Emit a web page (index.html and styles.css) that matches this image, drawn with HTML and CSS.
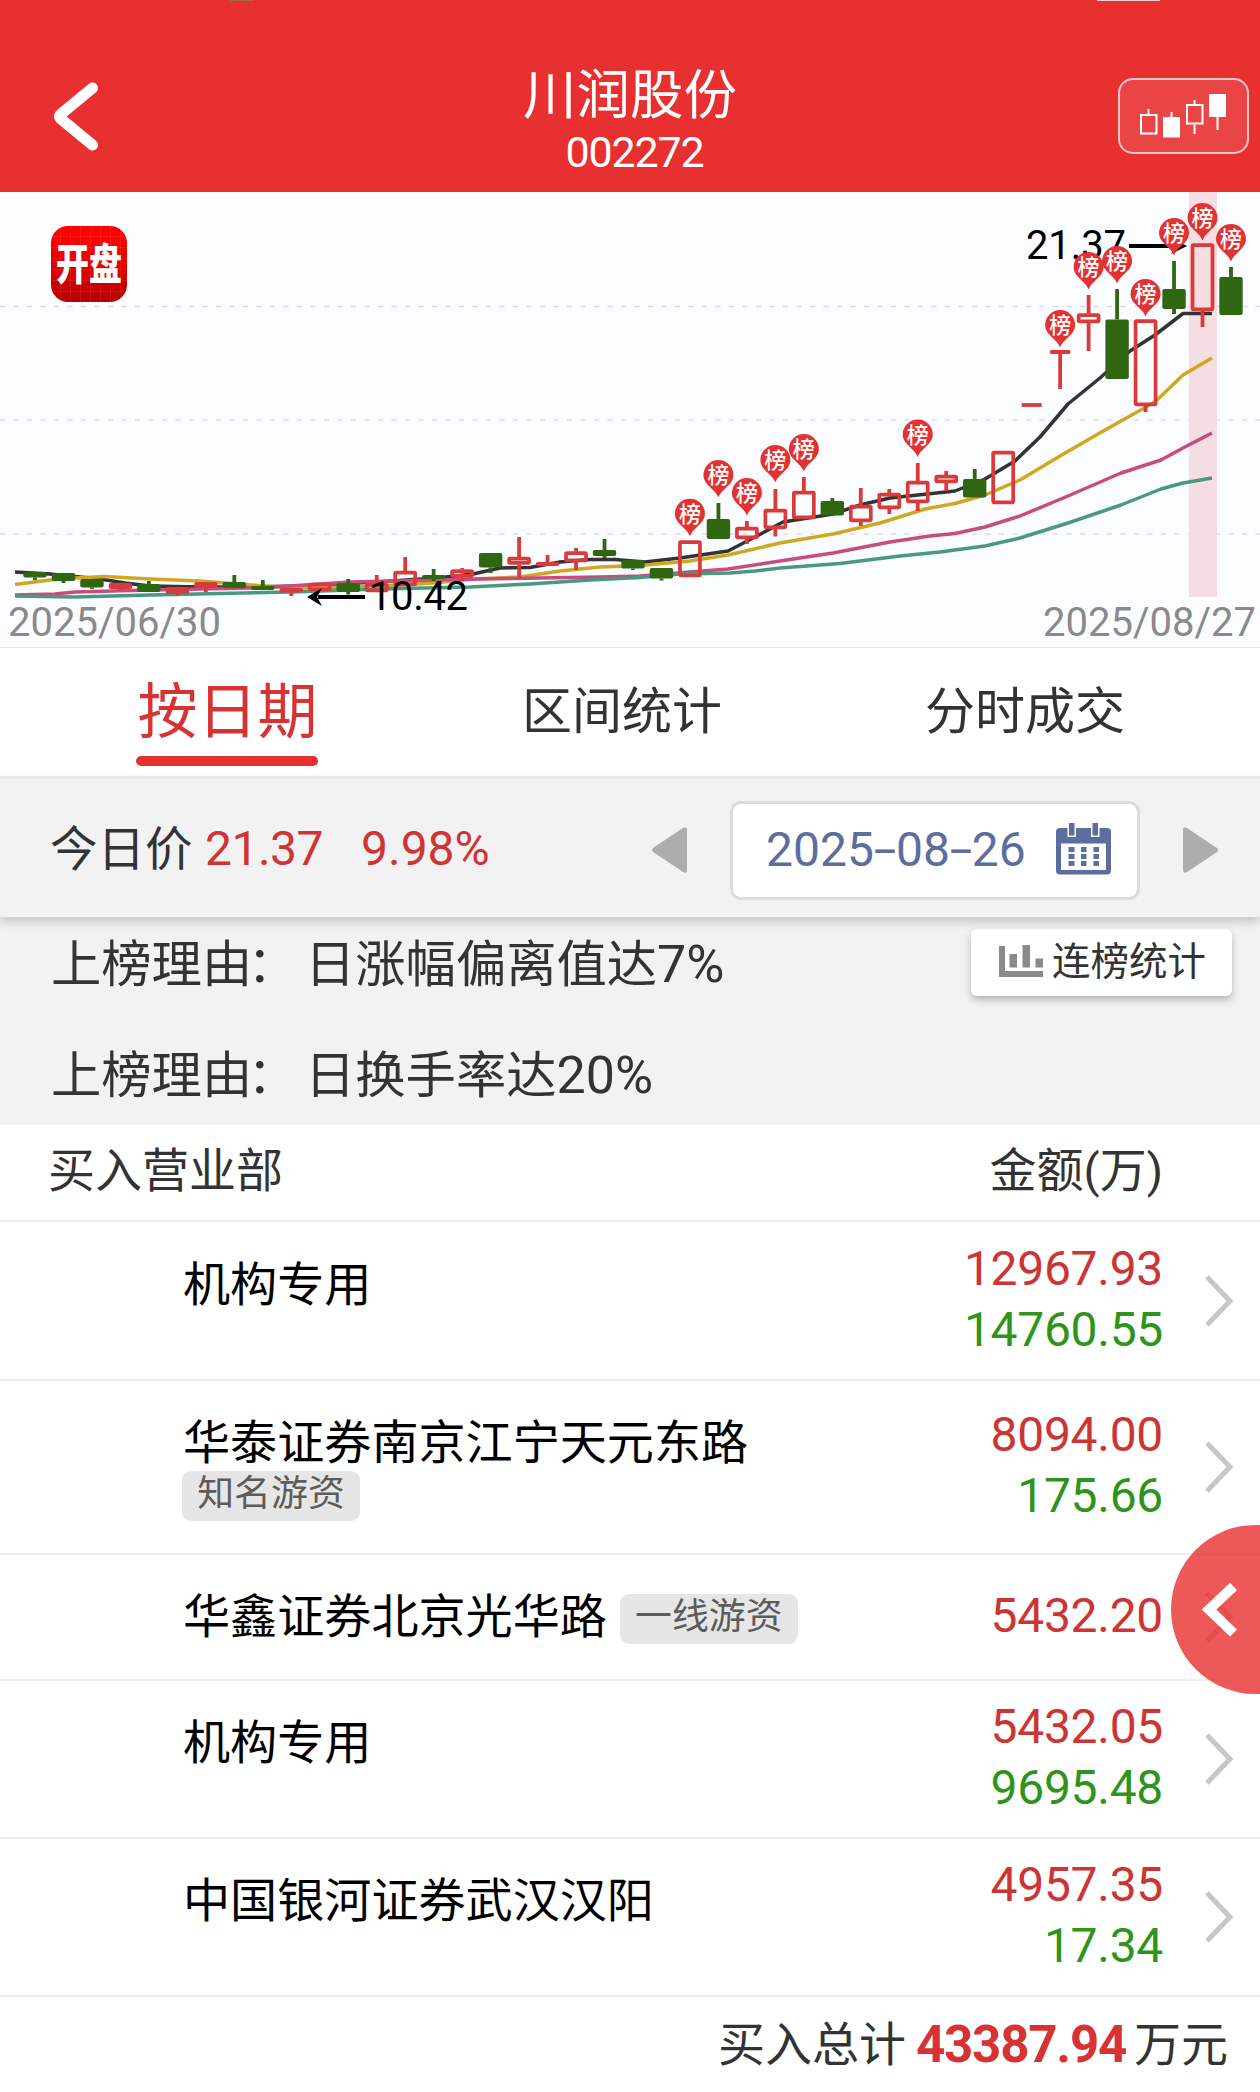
FILE: index.html
```html
<!DOCTYPE html>
<html lang="zh-CN">
<head>
<meta charset="utf-8">
<title>川润股份 002272</title>
<link rel="stylesheet" href="styles.css">
</head>
<body>
<header class="topbar">
  <svg class="back" width="60" height="80" viewBox="0 0 60 80"><path d="M47.500 12 16 38q-3 2.500 0 5L47.500 69" fill="none" stroke="#fff" stroke-width="11" stroke-linecap="round" stroke-linejoin="round"/></svg>
  <div class="heading">
    <h1 class="stock-name">川润股份</h1>
    <div class="stock-code">002272</div>
  </div>
  <div class="kline-button">
    <svg width="90" height="44" viewBox="0 0 90 44" fill="none" stroke="#fff" stroke-width="2">
      <path d="M11.500 15v6M34.500 18v5M57.500 6v5M57.500 31v9M80.500 22v14"/>
      <path d="M4 21h15.500v18.500H4zM50 11h15.500v18.500H50z"/>
      <path d="M26 23h17v20.500H26zM72 0h17v23H72z" fill="#fff" stroke="none"/>
    </svg>
  </div>
</header>

<section class="chart">
  <svg id="kline" width="1260" height="456" viewBox="0 192 1260 456"></svg>
  <div class="brand"><span class="brand-text">开盘</span></div>
</section>

<nav class="tabs">
  <div class="tab active">按日期</div>
  <div class="tab">区间统计</div>
  <div class="tab">分时成交</div>
</nav>

<section class="pricebar">
  <span class="price-label">今日价</span>
  <span class="price">21.37</span>
  <span class="change">9.98%</span>
  <svg class="prev" width="35" height="46" viewBox="0 0 35 46"><path d="M35 3v40q0 4-4 2L1 25q-2-2 0-4L31 1q4-2 4 2z" fill="#adadad"/></svg>
  <div class="datebox">
    <span class="date">2025<span class="dash">-</span>08<span class="dash">-</span>26</span>
    <svg width="55" height="52" viewBox="0 0 55 52">
      <rect y="5" width="55" height="46.500" rx="4" fill="#5c6e9f"/>
      <path d="M5 20.500h45v26.500H5z" fill="#fff"/>
      <path d="M11.500 0h8.500v14h-8.500zM35 0h8.500v14H35z" fill="#fff"/>
      <path d="M13 0h5.500v12.500H13zM36.500 0H42v12.500h-5.500z" fill="#5c6e9f"/>
      <path d="M12.500 24h6v5h-6zM25 24h5.500v5H25zM37.500 24h5.500v5h-5.500zM12.500 31h6v5h-6zM25 31h5.500v5H25zM37.500 31h5.500v5h-5.500zM12.500 38h6v5h-6zM25 38h5.500v5H25zM37.500 38h5.500v5h-5.500z" fill="#5c6e9f"/>
    </svg>
  </div>
  <svg class="next" width="35" height="46" viewBox="0 0 35 46"><path d="M0 3v40q0 4 4 2l30-20q2-2 0-4L4 1Q0-1 0 3z" fill="#adadad"/></svg>
</section>

<section class="reasons">
  <div class="reason-list">
    <p class="reason"><span class="reason-label">上榜理由<span class="colon">：</span></span>日涨幅偏离值达<span class="figure">7%</span></p>
    <p class="reason"><span class="reason-label">上榜理由<span class="colon">：</span></span>日换手率达<span class="figure">20%</span></p>
  </div>
  <div class="stat-button">
    <svg width="44" height="32" viewBox="0 0 44 32"><path d="M0 1h6v25h38v6H0zM10.500 9H18v13.500h-7.500zM23.500 0H31v22.500h-7.500zM36.500 13.500H44v9h-7.500z" fill="#8a8a8a"/></svg>
    <span class="stat-text">连榜统计</span>
  </div>
</section>

<section class="table">
  <div class="thead"><span>买入营业部</span><span>金额(万)</span></div>
  <div class="row first">
    <div class="name">机构专用</div>
    <div class="amounts"><span class="buy">12967.93</span><span class="sell">14760.55</span></div>
    <svg class="more" width="29" height="52" viewBox="0 0 29 52"><path d="M2 2l23 24L2 50"/></svg>
  </div>
  <div class="row tall">
    <div class="name">华泰证券南京江宁天元东路 <span class="tag below">知名游资</span></div>
    <div class="amounts"><span class="buy">8094.00</span><span class="sell">175.66</span></div>
    <svg class="more" width="29" height="52" viewBox="0 0 29 52"><path d="M2 2l23 24L2 50"/></svg>
  </div>
  <div class="row short">
    <div class="name">华鑫证券北京光华路<span class="tag">一线游资</span></div>
    <div class="amounts"><span class="buy">5432.20</span></div>
    <svg class="more" width="29" height="52" viewBox="0 0 29 52"><path d="M2 2l23 24L2 50"/></svg>
  </div>
  <div class="row">
    <div class="name">机构专用</div>
    <div class="amounts"><span class="buy">5432.05</span><span class="sell">9695.48</span></div>
    <svg class="more" width="29" height="52" viewBox="0 0 29 52"><path d="M2 2l23 24L2 50"/></svg>
  </div>
  <div class="row">
    <div class="name">中国银河证券武汉汉阳</div>
    <div class="amounts"><span class="buy">4957.35</span><span class="sell">17.34</span></div>
    <svg class="more" width="29" height="52" viewBox="0 0 29 52"><path d="M2 2l23 24L2 50"/></svg>
  </div>
  <div class="total"><span>买入总计</span><b class="total-value">43387.94</b><span>万元</span></div>
</section>

<div class="drawer">
  <svg width="89" height="169" viewBox="0 0 89 169"><path d="M62.500 61.500 38 84.500l24.500 23.500" fill="none" stroke="#fff" stroke-width="10"/></svg>
</div>
<script src="chart.js"></script>
</body>
</html>
```
FILE: styles.css
```css
* { box-sizing: border-box; }
body {
  position: relative;
  width: 1260px;
  height: 2092px;
  margin: 0;
  overflow: hidden;
  background: #fff;
  color: #333;
  font-family: Roboto, "Noto Sans CJK SC", sans-serif;
}
h1, p { margin: 0; font-weight: 400; }
svg { display: block; flex: none; }

.topbar {
  display: grid;
  grid-template-columns: 1fr auto 1fr;
  height: 192px;
  padding: 62px 11px 0 45px;
  color: #fff;
  background:
    linear-gradient(#a5683f, #a5683f) 230px 0 / 24px 1px no-repeat,
    linear-gradient(#f8d0d0, #f8d0d0) 1097px 0 / 63px 1px no-repeat,
    #e83030;
}
.back { margin-top: 14px; }
.heading { margin-left: -34px; text-align: center; }
.stock-name { padding-top: 2px; font-size: 53.5px; line-height: 64px; }
.stock-code { margin-top: 1px; padding-left: 9px; font-size: 43px; line-height: 46px; letter-spacing: -1.200px; }
.kline-button {
  display: flex;
  justify-self: end;
  width: 131px;
  height: 76px;
  margin-top: 16px;
  padding: 14px 0 0 17px;
  border: 2px solid rgba(255, 255, 255, .7);
  border-radius: 15px;
  background: rgba(255, 255, 255, .1);
}

.chart { position: relative; height: 456px; background: #fbfcff; }
.brand {
  position: absolute;
  left: 51px;
  top: 34px;
  display: flex;
  align-items: center;
  justify-content: center;
  width: 76px;
  height: 76px;
  border-radius: 17px;
  color: #fff;
  background:
    repeating-linear-gradient(90deg, transparent 0 9px, rgba(255, 255, 255, .08) 9px 10px),
    repeating-linear-gradient(transparent 0 10px, rgba(255, 255, 255, .08) 10px 11px),
    linear-gradient(#ff0000 20%, #b50000);
}
.brand-text { padding-top: 2px; font-size: 33px; font-weight: 900; line-height: 40px; transform: scaleY(1.3); }
.pin-text { font: 500 22px "Noto Sans CJK SC", sans-serif; fill: #fff; text-anchor: middle; }
.mark { font-size: 40px; fill: #000; }
.axis { font-size: 40px; fill: #8a8a8a; }

.tabs { display: flex; gap: 204px; height: 128px; padding-left: 136px; }
.tab { width: 200px; padding-top: 2px; margin-left: -1px; font-size: 50px; line-height: 124px; text-align: center; }
.tab.active { display: flex; flex-direction: column; width: 183px; margin-left: 0; padding-top: 3px; font-size: 60px; line-height: 124px; color: #d83232; }
.tab.active::after { content: ""; width: 182px; height: 10px; margin-top: -19px; border-radius: 5px; background: #e83030; }

.pricebar {
  position: relative;
  display: flex;
  align-items: center;
  height: 141px;
  padding: 4px 42px 0 50px;
  border-top: 3px solid #ebebeb;
  background: #f2f2f2;
  box-shadow: 0 5px 9px rgba(0, 0, 0, .18);
  font-size: 48px;
}
.price-label { width: 155px; padding-bottom: 10px; font-size: 47.500px; }
.price, .change { padding-bottom: 3px; color: #d03434; }
.price { width: 156px; letter-spacing: -.5px; }
.change { width: 291px; }
.datebox {
  display: flex;
  align-items: center;
  justify-content: space-between;
  width: 410px;
  height: 99px;
  margin: 0 43px;
  padding: 0 26px 2px 33px;
  border: 3px solid #dcdcdc;
  border-radius: 11px;
  background: #fff;
  color: #5c6e9f;
}
.dash { display: inline-block; width: 22px; text-align: center; transform: scaleX(1.7); }

.reasons { display: flex; justify-content: space-between; height: 208px; padding: 0 28px 0 51px; background: #f2f2f2; }
.reason { height: 111px; padding-top: 8px; font-size: 50.300px; line-height: 80px; }
.reason-label { display: inline-block; width: 254px; white-space: nowrap; }
.colon { margin-left: -5px; }
.figure { font-size: 52px; }
.stat-button {
  display: flex;
  align-items: center;
  gap: 9px;
  width: 261px;
  height: 67px;
  margin-top: 12px;
  padding: 0 0 4px 28px;
  border-radius: 6px;
  background: #fff;
  box-shadow: 0 4px 7px rgba(0, 0, 0, .25);
  font-size: 38.500px;
}
.stat-text { padding-bottom: 6px; }

.thead { display: flex; justify-content: space-between; height: 95px; padding: 2px 97px 0 48px; font-size: 47px; line-height: 88px; }
.row { display: flex; align-items: center; height: 158px; padding: 0 26px 0 183px; border-top: 2px solid #eee; color: #000; }
.row.first { height: 159px; }
.row.tall { height: 174px; }
.row.short { height: 126px; }
.name { align-self: flex-start; width: 660px; padding-top: 32px; font-size: 47.100px; line-height: 60px; white-space: nowrap; }
.first .name { padding-top: 33px; }
.tag {
  display: inline-block;
  width: 178px;
  height: 50px;
  margin-left: 13px;
  border-radius: 9px;
  background: #e6e6e6;
  color: #5c5c5c;
  font-size: 36.900px;
  line-height: 46px;
  text-align: center;
  vertical-align: middle;
}
.tag.below { display: block; margin: -2px 0 0 -1px; }
.short .tag { margin-top: -4px; }
.amounts { display: flex; flex: 1; flex-direction: column; padding: 0 42px 4px 0; font-size: 48px; line-height: 61px; letter-spacing: -.300px; text-align: right; }
.buy { color: #cd3434; }
.sell { color: #2e941b; }
.more path { fill: none; stroke: #c7c7c7; stroke-width: 5; }
.total { display: flex; justify-content: flex-end; height: 97px; padding: 2px 32px 0 0; border-top: 2px solid #eee; font-size: 47px; line-height: 92px; }
.total-value { margin: 0 8px 0 10px; font-size: 51px; letter-spacing: -1.200px; color: #d83232; }

.drawer {
  position: absolute;
  left: 1171px;
  top: 1525px;
  width: 89px;
  height: 169px;
  overflow: hidden;
  border-radius: 85px 4px 4px 85px / 85px 0 0 85px;
  background: rgba(232, 48, 48, .8);
}
```
FILE: chart.js
```js
const RED = '#d93a3a';
const GREEN = '#2f6612';
// kind (g = falling, r = rising solid, h = rising hollow, l = flat), body top, body bottom, high, low, pin top
const candles = [
  ['g', 572, 577.5, 572, 580], ['g', 573, 581, 573, 583], ['g', 579, 587.5, 579, 589],
  ['r', 583, 589, 583, 590], ['g', 584, 592, 581, 592], ['r', 587, 594, 587, 596],
  ['r', 582, 588, 582, 592], ['g', 582, 588, 575, 588], ['g', 586, 590, 580, 590],
  ['r', 588, 592.5, 588, 596], ['h', 583, 591, 583, 591], ['g', 583, 592, 579, 594.5],
  ['h', 583, 592, 575, 592], ['h', 571, 586, 557, 586], ['g', 575, 579, 569, 581],
  ['h', 569.5, 577.5, 568, 581], ['g', 553, 567.5, 553, 573], ['h', 557, 564.5, 537, 578],
  ['r', 562, 566, 555, 566], ['h', 551.5, 562, 548, 570], ['g', 550, 556, 539, 558],
  ['g', 560, 568.5, 560, 570], ['g', 568, 578.5, 568, 580.5], ['h', 540.5, 577, 540.5, 577, 498.7],
  ['g', 519, 539, 503, 539, 460], ['h', 527, 539, 521, 544, 478], ['h', 509, 529, 489, 536.5, 445],
  ['h', 491, 519, 477, 519, 434], ['g', 501, 515.5, 498, 515.5], ['h', 505, 522, 488, 526],
  ['h', 493, 509, 489, 514], ['h', 481, 503, 463, 511, 419.5], ['h', 475, 483, 471, 491],
  ['g', 479, 497.5, 469, 497.5], ['h', 451, 504, 451, 504], ['l', 405, 405, 405, 405],
  ['l', 352, 352, 352, 389, 310], ['h', 313.5, 323, 295, 351, 252], ['g', 319.5, 379, 289, 379, 246],
  ['h', 319.5, 406, 319.5, 412, 279], ['g', 289, 309, 261, 314, 218], ['h', 243.5, 311, 243.5, 327, 203],
  ['g', 277, 315, 267, 315, 224]
];
const averages = [
  ['#333', '15,572 50,574 100,579 125,583 150,586 200,587 250,587 300,586 376,582 437,578 473,574 500,568 530,567.5 560,562 590,559.5 615,559.5 645,562 680,558 728,551 755,537 783,522 833,514 860,505 890,498 918,495 955,491 985,479 1015,461 1040,437 1068,404 1100,378 1130,351 1155,335 1183,313.5 1212,313.5'],
  ['#cfa820', '15,584.500 50,580 75,578 105,576.500 150,579 200,581 250,585 300,588 348,587 400,585 433,583 473,579 520,577 560,571 600,567 640,565.500 690,561 728,555 780,543 833,534 880,523 925,509 955,503.500 985,495 1020,480 1060,456 1105,430 1155,402 1183,375 1212,358'],
  ['#c74c80', '15,595 55,594 75,592 150,590 250,588 290,586 350,582 480,579 600,577 640,576 690,572 728,569 780,561 833,553 890,542 930,536 955,533.500 985,527 1020,516 1068,496 1121,473 1161,460 1183,448 1212,433'],
  ['#489882', '15,596 75,597 150,595 220,593.500 290,592 380,589 470,587 530,584 590,580 640,577.500 680,574 730,573 755,571 780,568 840,563.500 900,556 940,552 985,546 1020,538 1068,523 1121,505 1161,489 1183,483 1212,478']
];

const xOf = i => 35 + i * 28.476;
let out = '';
for (const y of [306.5, 420, 534]) {
  out += `<path d="M0 ${y}H1260" stroke="#d9dbe1" stroke-width="1.500" stroke-dasharray="5 8.500"/>`;
}
out += '<rect x="1189" y="192" width="28" height="405" fill="#f6dde2"/>';
averages.forEach(([color, points]) => {
  out += `<polyline points="${points}" fill="none" stroke="${color}" stroke-width="3.500" stroke-linejoin="round"/>`;
});
candles.forEach(([kind, top, bottom, high, low], i) => {
  const x = xOf(i);
  const color = kind === 'g' ? GREEN : RED;
  if (kind === 'l') {
    out += `<path d="M${x - 10} ${top}h20M${x} ${top}V${low}" stroke="${color}" stroke-width="3.800"/>`;
    return;
  }
  out += `<path d="M${x} ${high}V${top}M${x} ${bottom}V${low}" stroke="${color}" stroke-width="3.800"/>`;
  out += kind === 'h'
    ? `<rect x="${x - 10}" y="${top + 1.7}" width="20" height="${bottom - top - 3.4}" rx="1" fill="none" stroke="${color}" stroke-width="3.700"/>`
    : `<rect x="${x - 11.7}" y="${top}" width="23.400" height="${bottom - top}" rx="2" fill="${color}"/>`;
});
out += '<path d="M1129 246H1179" stroke="#000" stroke-width="4"/><path d="M1187 246l-16-8 5 8-5 8z"/>';
out += '<text class="mark" x="1026" y="259" textLength="100">21.37</text>';
out += '<path d="M318 597H365" stroke="#000" stroke-width="4"/><path d="M307 597l15-9-5 9 5 9z"/>';
out += '<text class="mark" x="369" y="610" textLength="99">10.42</text>';
candles.forEach(([, , , , , pin], i) => {
  if (pin === undefined) return;
  const x = xOf(i);
  out += `<path d="M${x} ${pin + 37.5}C${x - 3} ${pin + 29} ${x - 15} ${pin + 25} ${x - 15} ${pin + 15}a15 15 0 0 1 30 0C${x + 15} ${pin + 25} ${x + 3} ${pin + 29} ${x} ${pin + 37.5}z" fill="#e13333"/>`;
  out += `<text class="pin-text" x="${x}" y="${pin + 23}">榜</text>`;
});
out += '<text class="axis" x="8" y="636" textLength="213">2025/06/30</text>';
out += '<text class="axis" x="1043" y="636" textLength="213">2025/08/27</text>';
out += '<path d="M0 647.500H1260" stroke="#e6e6e6"/>';
document.getElementById('kline').innerHTML = out;
```
